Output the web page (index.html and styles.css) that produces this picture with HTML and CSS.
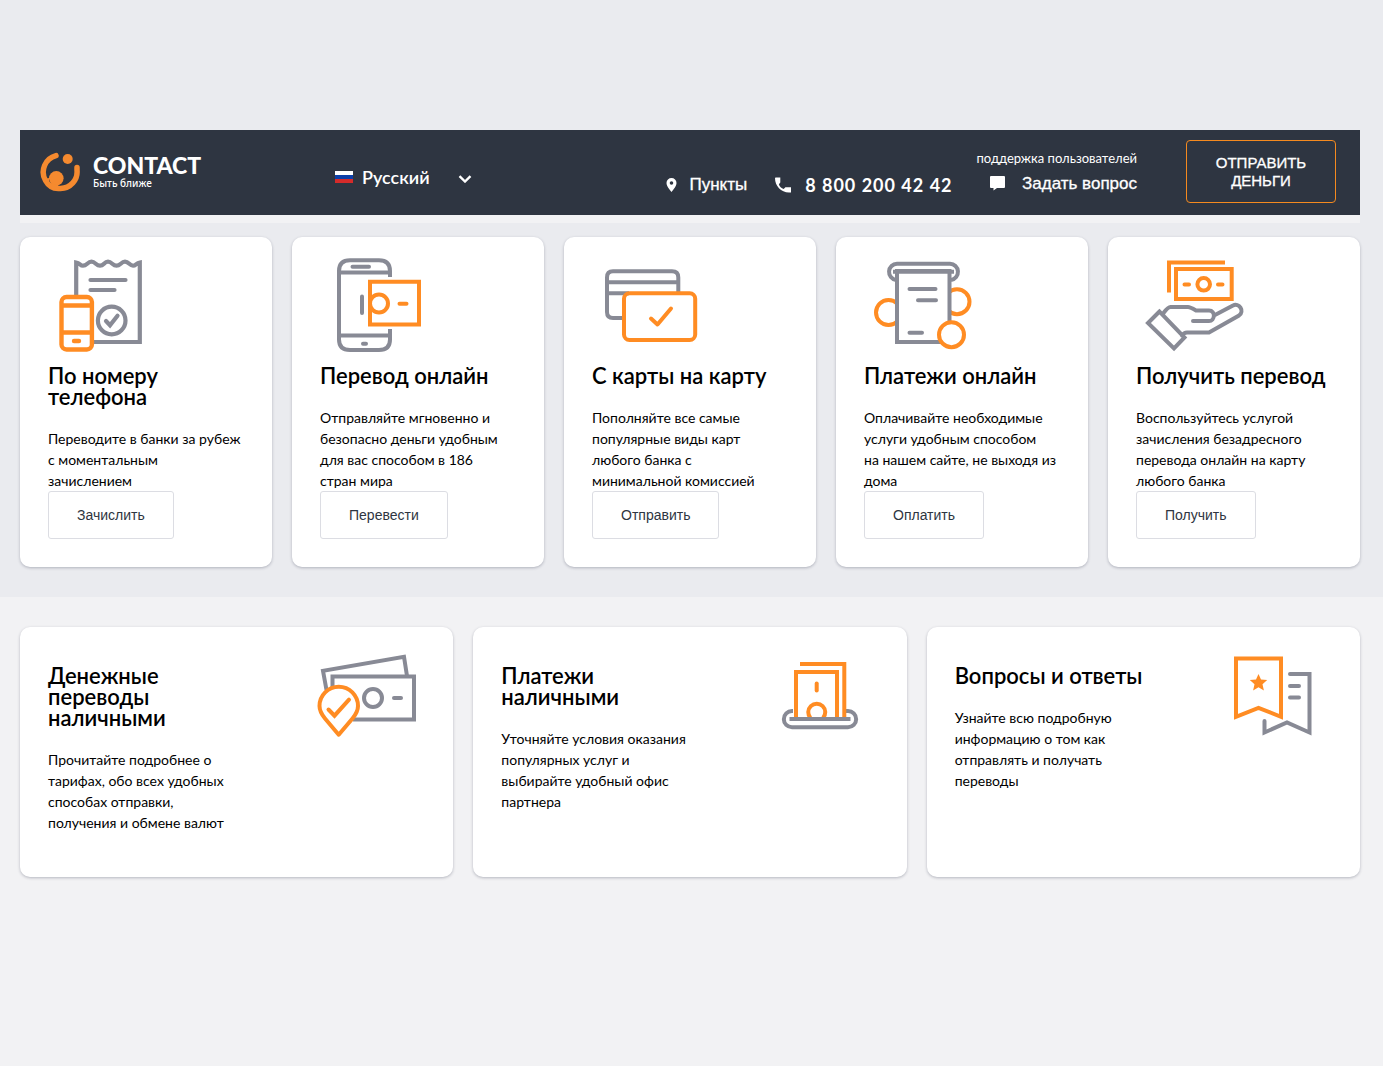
FILE: index.html
```html
<!DOCTYPE html>
<html lang="ru">
<head>
<meta charset="utf-8">
<meta name="viewport" content="width=device-width, initial-scale=1">
<title>CONTACT</title>
<link rel="stylesheet" href="styles.css">
</head>
<body>
<div class="top">
  <header class="header">
    <a class="logo" href="#">
      <svg class="logo-mark" viewBox="0 0 40 40" aria-hidden="true">
        <path d="M16 3.600A17 17 0 0 0 5.500 28.500C9 35 15 37 20.500 36.400A16.700 16.700 0 0 0 37 18V15.500" fill="none" stroke="#f58a2f" stroke-width="5.500" stroke-linecap="round"/>
        <circle cx="16.300" cy="26.300" r="7.300" fill="#f58a2f"/>
        <path d="M5 27L9 26 9 31 18 33 20 38 12 37 6 32Z" fill="#f58a2f"/>
        <circle cx="27.700" cy="7" r="5" fill="#f58a2f"/>
      </svg>
      <span class="logo-text"><span class="logo-name">CONTACT</span><span class="logo-sub">Быть ближе</span></span>
    </a>
    <label class="lang">
      <svg class="flag" viewBox="0 0 18 12" aria-hidden="true"><path fill="#fff" d="M0 0h18v4H0z"/><path fill="#0c3fa8" d="M0 4h18v4H0z"/><path fill="#d52b2a" d="M0 8h18v4H0z"/></svg>
      <select class="lang-select" aria-label="Язык"><option>Русский</option></select>
      <svg class="chevron" viewBox="0 0 14 8" aria-hidden="true"><path d="M1.500 1.200L7 6.500 12.500 1.200" fill="none" stroke="#fff" stroke-width="2.400"/></svg>
    </label>
    <nav class="contacts">
      <a class="points" href="#">
        <svg class="pin" viewBox="0 0 10 14" aria-hidden="true"><path fill="#fff" fill-rule="evenodd" d="M5 0a5 5 0 0 1 5 5c0 3.500-5 9-5 9S0 8.500 0 5a5 5 0 0 1 5-5zm0 3.200a1.800 1.800 0 1 0 0 3.600 1.800 1.800 0 0 0 0-3.600z"/></svg>
        Пункты
      </a>
      <a class="phone" href="tel:88002004242">
        <svg class="handset" viewBox="0 0 16 16" aria-hidden="true"><path fill="#fff" d="M0 1Q0 .500.800.500H5.300V5.600L3.900 7.200Q5 10.800 8.700 11.900L10.400 10.300H16V15.500H14C6 15.500 0 9 0 1Z"/></svg>
        8 800 200 42 42
      </a>
    </nav>
    <div class="support">
      <span class="support-label">поддержка пользователей</span>
      <a class="ask" href="#">
        <svg class="chat" viewBox="0 0 15 15" aria-hidden="true"><path fill="#fff" d="M1 0h13a1 1 0 0 1 1 1v10a1 1 0 0 1-1 1H7l-3.500 2.500V12H1a1 1 0 0 1-1-1V1a1 1 0 0 1 1-1z"/></svg>
        Задать вопрос
      </a>
    </div>
    <button class="send" type="button">ОТПРАВИТЬ ДЕНЬГИ</button>
  </header>
  <main class="services">
    <article class="card">
      <svg class="card-icon" viewBox="48 253 112 112" aria-hidden="true">
        <g fill="none" stroke="#888a95" stroke-width="4.200">
          <path d="M76.200 297V262.500C80 263 80 265.700 83 265.700C87 265.700 87.500 261.700 91.500 261.700S96 265.700 100 265.700 104 261.700 108 261.700 112.500 265.700 116.500 265.700 121 261.700 125 261.700 129.500 265.700 133 265.700C136 265.700 136 263 139.800 262.500V342H94"/>
          <path d="M90.500 280h35M90.500 290h24" stroke-linecap="round"/>
          <circle cx="111.700" cy="320.500" r="13.800"/>
          <path d="M106 321l4 4.200 7.500-9.500" stroke-linecap="round"/>
        </g>
        <g fill="none" stroke="#ff8c23" stroke-width="4.400"><rect x="61.500" y="297" width="30.400" height="52.500" rx="5"/><path d="M61 305.500h31M61 332.500h31"/><path d="M74 341h5" stroke-linecap="round"/></g>
      </svg>
      <h2 class="title">По номеру<br>телефона</h2>
      <p class="text">Переводите в банки за рубеж<br>с моментальным<br>зачислением</p>
      <button class="action" type="button">Зачислить</button>
    </article>
    <article class="card">
      <svg class="card-icon" viewBox="320 253 112 112" aria-hidden="true">
        <g fill="none" stroke="#888a95" stroke-width="4">
          <path d="M390 277V271Q390 260.300 379 260.300H350Q339 260.300 339 271V339.500Q339 350 350 350H379Q390 350 390 339.500V329M339 272.500h51M339 335.500h51"/>
          <path d="M352.500 266.800h16.500M362 296.500v16.500M363 343.700h3" stroke-linecap="round"/>
        </g>
        <g fill="none" stroke="#ff8c23" stroke-width="4"><path d="M370 281.800h49v42.800h-49z"/><circle cx="379" cy="303.500" r="9"/><path d="M399.500 303.700h7" stroke-linecap="round"/></g>
      </svg>
      <h2 class="title">Перевод онлайн</h2>
      <p class="text">Отправляйте мгновенно и<br>безопасно деньги удобным<br>для вас способом в 186<br>стран мира</p>
      <button class="action" type="button">Перевести</button>
    </article>
    <article class="card">
      <svg class="card-icon" viewBox="592 253 112 112" aria-hidden="true">
        <path d="M678.300 292V277.500Q678.300 271.300 672 271.300H613Q607 271.300 607 277.500V312Q607 318 613 318H623M607 282.300h71M607 293.300h22" fill="none" stroke="#888a95" stroke-width="4"/>
        <g fill="none" stroke="#ff8c23" stroke-width="4"><rect x="624" y="293.300" width="71.200" height="46.600" rx="5.500"/><path d="M651 318.500l6.500 6 13.500-16" stroke-linecap="round" stroke-linejoin="round"/></g>
      </svg>
      <h2 class="title">С карты на карту</h2>
      <p class="text">Пополняйте все самые<br>популярные виды карт<br>любого банка с<br>минимальной комиссией</p>
      <button class="action" type="button">Отправить</button>
    </article>
    <article class="card">
      <svg class="card-icon" viewBox="864 253 112 112" aria-hidden="true">
        <g fill="none" stroke="#ff8c23" stroke-width="4"><circle cx="888.500" cy="312.500" r="12.500"/><circle cx="957" cy="301.700" r="12.500"/></g>
        <path d="M897 271h52.500v71H897z" fill="#fff" stroke="#888a95" stroke-width="4"/>
        <g fill="none" stroke="#888a95" stroke-width="4"><path d="M896 280a8.200 8.200 0 0 1 1-16.300h53a8.200 8.200 0 0 1 1 16.300M893 271.800h61"/><path d="M909.500 289h26M918 300.300h18M909.500 332.700h12.500" stroke-linecap="round"/></g>
        <circle cx="951.500" cy="334.700" r="12.500" fill="#fff" stroke="#ff8c23" stroke-width="4"/>
      </svg>
      <h2 class="title">Платежи онлайн</h2>
      <p class="text">Оплачивайте необходимые<br>услуги удобным способом<br>на нашем сайте, не выходя из<br>дома</p>
      <button class="action" type="button">Оплатить</button>
    </article>
    <article class="card">
      <svg class="card-icon" viewBox="1136 253 112 112" aria-hidden="true">
        <g fill="none" stroke="#ff8c23" stroke-width="4"><path d="M1225 262.500h-56v30M1176 269h55.700v30H1176z"/><circle cx="1203.700" cy="284.300" r="6.300"/><path d="M1184.500 284.500h4.500M1218 284.500h4.500" stroke-linecap="round"/></g>
        <path d="M1159.500 311.500L1148 323l26 25.500L1184.500 337.500ZM1163.500 313Q1168 307 1170.500 307H1188Q1190 307 1196 310.500H1209C1216 310.500 1215 321 1209 321H1193M1214 315.500L1233 305.500C1239 302.500 1245 311 1239 315.500L1209 332.500H1187Q1184 332.500 1182 335.500" fill="none" stroke="#888a95" stroke-width="4" stroke-linecap="round"/>
      </svg>
      <h2 class="title">Получить перевод</h2>
      <p class="text">Воспользуйтесь услугой<br>зачисления безадресного<br>перевода онлайн на карту<br>любого банка</p>
      <button class="action" type="button">Получить</button>
    </article>
  </main>
</div>
<section class="more">
  <article class="card wide">
    <div>
      <h2 class="title">Денежные<br>переводы<br>наличными</h2>
      <p class="text">Прочитайте подробнее о<br>тарифах, обо всех удобных<br>способах отправки,<br>получения и обмене валют</p>
    </div>
    <svg class="wide-icon" viewBox="314 645 104 104" aria-hidden="true">
      <g fill="none" stroke="#888a95" stroke-width="4"><path d="M326.500 690L323 670.800 404 656.800 407 676"/><path d="M332.500 690V676.500h81.500v43h-61"/><circle cx="373" cy="698" r="9"/><path d="M394 698h7" stroke-linecap="round"/></g>
      <path d="M338.700 734.700L325 718.500C320.500 713 319.500 710 319.500 706a19.200 19.200 0 0 1 38.500 0C358 710 357 713 352.500 718.500Z" fill="#fff" stroke="#ff8c23" stroke-width="4" stroke-linejoin="round"/>
      <path d="M328.500 709.500l6 6.200 14.500-16" fill="none" stroke="#ff8c23" stroke-width="4" stroke-linecap="round"/>
    </svg>
  </article>
  <article class="card wide">
    <div>
      <h2 class="title">Платежи<br>наличными</h2>
      <p class="text">Уточняйте условия оказания<br>популярных услуг и<br>выбирайте удобный офис<br>партнера</p>
    </div>
    <svg class="wide-icon" viewBox="768 645 104 104" aria-hidden="true">
      <path d="M793 711h-1a8 8 0 0 0 0 16.300h56a8 8 0 0 0 0-16.300h-3" fill="none" stroke="#888a95" stroke-width="4"/>
      <g fill="none" stroke="#ff8c23" stroke-width="4"><path d="M800 664h44.300v54M796 718v-46h41v46"/><path d="M816.700 683.500v7" stroke-linecap="round"/><path d="M810.500 718A8.500 8.500 0 1 1 823 718"/></g>
      <path d="M789.500 719h61" stroke="#888a95" stroke-width="4"/>
    </svg>
  </article>
  <article class="card wide">
    <div>
      <h2 class="title">Вопросы и ответы</h2>
      <p class="text">Узнайте всю подробную<br>информацию о том как<br>отправлять и получать<br>переводы</p>
    </div>
    <svg class="wide-icon" viewBox="1221 645 104 104" aria-hidden="true">
      <g fill="none" stroke="#888a95" stroke-width="4"><path d="M1290 674h19.500v58.500L1287 722.500l-22.500 10V721" stroke-linecap="round"/><path d="M1290 686h9M1290 697.500h9" stroke-linecap="round"/></g>
      <path d="M1236 658.500h45v58.300l-22.500-9-22.500 9z" fill="#fff" stroke="#ff8c23" stroke-width="4"/>
      <path fill="#ff8c23" d="M1258.500 674l2.500 5.500 6.200.600-4.700 4.200 1.400 6.200-5.400-3.200-5.400 3.200 1.400-6.200-4.700-4.200 6.200-.600z"/>
    </svg>
  </article>
</section>
</body>
</html>
```
FILE: styles.css
```css
* { box-sizing: border-box; }
body {
  margin: 0;
  min-height: 100vh;
  background: #f2f2f4;
  color: #000;
  font-family: Lato, "Noto Sans", sans-serif;
}
a { color: inherit; text-decoration: none; }
svg { display: block; flex: none; }
.top { padding: 130px 23px 30px 20px; background: #eaebef; }
.header {
  display: flex;
  align-items: center;
  min-height: 93px;
  padding: 0 24px 2px 20px;
  border-bottom: 8px solid #f2f2f4;
  background: #2e3541;
  color: #fff;
}
.logo { display: flex; align-items: center; gap: 13px; width: 295px; }
.logo-mark { width: 40px; height: 40px; }
.logo-text { display: flex; flex-direction: column; }
.logo-name { font-size: 23px; line-height: 24px; font-weight: 900; }
.logo-sub { font: 500 10px/13px "Noto Sans", sans-serif; }
.lang { display: flex; align-items: center; padding-top: 10px; }
.flag { width: 18px; height: 12px; margin-right: 9px; }
.lang-select {
  appearance: none;
  width: 96px;
  padding: 0;
  border: 0;
  background: none;
  color: #fff;
  font: 600 18px/24px Lato, "Noto Sans", sans-serif;
}
.chevron { width: 14px; height: 8px; margin-top: 4px; }
.contacts { display: flex; align-items: center; gap: 28px; margin-left: auto; padding-top: 27px; }
.points, .phone { display: flex; align-items: center; gap: 12px; white-space: nowrap; }
.points, .ask { font: 17px/22px "Liberation Sans", Arial, sans-serif; -webkit-text-stroke: 0.3px #fff; }
.pin { width: 11px; height: 14px; }
.handset { width: 16px; height: 16px; }
.phone { gap: 14px; font-size: 18px; line-height: 22px; font-weight: 700; letter-spacing: 1px; }
.support { display: flex; flex-direction: column; align-items: flex-end; gap: 6px; margin: 0 49px 0 24px; white-space: nowrap; }
.support-label { font-size: 13px; line-height: 18px; }
.ask { display: flex; align-items: center; gap: 17px; }
.chat { width: 15px; height: 15px; }
.send {
  width: 150px;
  height: 63px;
  padding: 0 20px;
  border: 1px solid #f58a1f;
  border-radius: 4px;
  background: none;
  color: #fff;
  font: 15px/18px "Liberation Sans", Arial, sans-serif;
  -webkit-text-stroke: 0.3px #fff;
}
.services { display: grid; grid-template-columns: repeat(5, 1fr); gap: 20px; margin-top: 14px; }
.card {
  padding: 16px 16px 28px 28px;
  border-radius: 10px;
  background: #fff;
  box-shadow: 0 1px 3px rgba(40, 45, 70, 0.3);
}
.card-icon { width: 112px; height: 112px; }
.title { margin: 0 0 21px; font-size: 22px; line-height: 21px; font-weight: 600; white-space: nowrap; }
.text { margin: 0; font-size: 14px; line-height: 21px; white-space: nowrap; }
.action {
  display: block;
  height: 48px;
  padding: 0 28px;
  border: 1px solid #dcdde3;
  border-radius: 3px;
  background: #fff;
  color: #2e3541;
  font: 14px/20px "Liberation Sans", Arial, sans-serif;
}
.more { display: grid; grid-template-columns: repeat(3, 1fr); gap: 20px; padding: 30px 23px 30px 20px; }
.wide { display: flex; justify-content: space-between; min-height: 250px; padding: 38px 35px 28px 28px; }
.wide-icon { width: 104px; height: 104px; margin-top: -20px; }
```
